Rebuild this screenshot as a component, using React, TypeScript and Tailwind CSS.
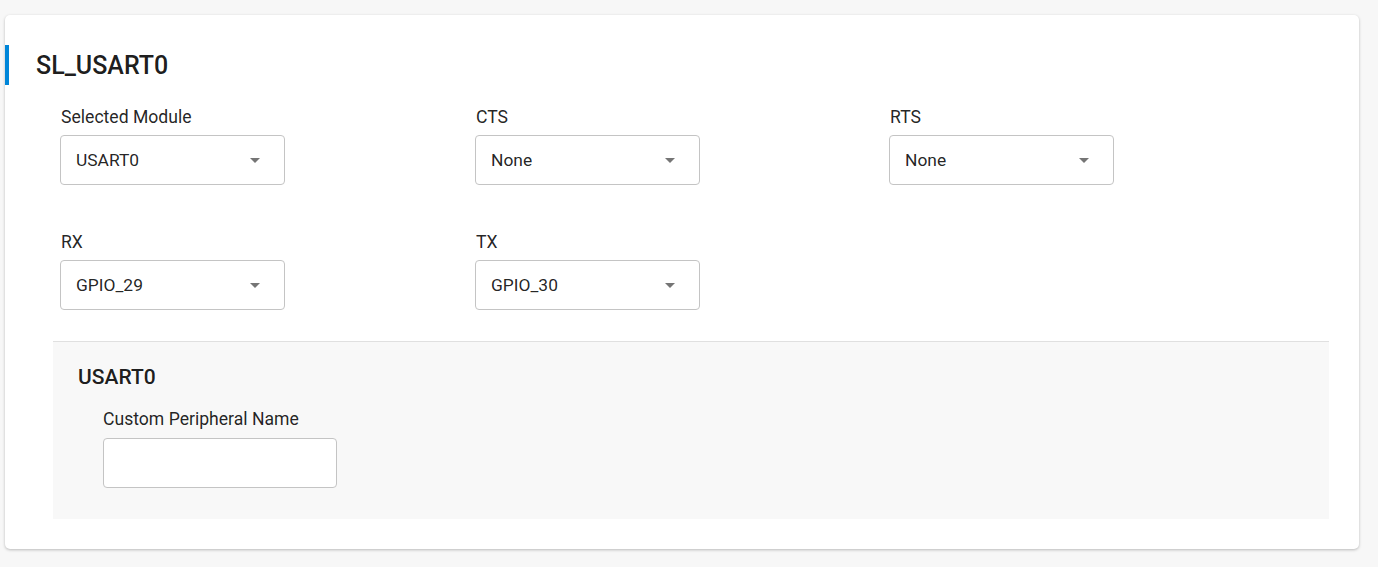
import React from "react";

function Arrow() {
  return (
    <svg width="24" height="24" viewBox="0 0 24 24" className="absolute right-[17px] top-1/2 -translate-y-1/2">
      <path d="M7 10l5 5 5-5z" fill="#757575" />
    </svg>
  );
}

function SelectField({ label, value }: { label: string; value: string }) {
  return (
    <div className="flex flex-col">
      <div className="h-[24px] leading-[24px] text-[17.6px] text-[rgba(0,0,0,0.87)] pl-[1px]">{label}</div>
      <div className="relative mt-[6px] w-[225px] h-[50px] border border-[#c4c4c4] rounded-[4px] bg-white flex items-center pl-[15px] text-[17.4px] text-[rgba(0,0,0,0.87)]">
        {value}
        <Arrow />
      </div>
    </div>
  );
}

export default function App() {
  return (
    <div
      className="min-h-screen bg-[#f7f7f7] pt-[15px] pl-[5px] pr-[19px] pb-[18px]"
      style={{ fontFamily: "Roboto, 'Liberation Sans', sans-serif" }}
    >
      <div className="bg-white rounded-[5px] shadow-[0_1px_3px_rgba(0,0,0,0.25)] h-[534px] pt-[30px]">
        <div className="h-[40px] border-l-4 border-[#0086d9] flex items-center pl-[27px]">
          <h1 className="text-[25px] font-medium text-[rgba(0,0,0,0.9)] leading-none">SL_USART0</h1>
        </div>
        <div className="mt-[20px] ml-[55px] grid grid-cols-[415px_414px_225px] gap-y-[45px]">
          <SelectField label="Selected Module" value="USART0" />
          <SelectField label="CTS" value="None" />
          <SelectField label="RTS" value="None" />
          <SelectField label="RX" value="GPIO_29" />
          <SelectField label="TX" value="GPIO_30" />
        </div>
        <div className="mt-[31px] ml-[48px] mr-[30px] h-[178px] bg-[#f8f8f8] border-t border-[#e0e0e0] pt-[21px] pl-[25px]">
          <div className="text-[21px] font-medium leading-[28px] text-[rgba(0,0,0,0.9)]">USART0</div>
          <div className="mt-[16px] pl-[25px]">
            <div className="h-[24px] leading-[24px] text-[17.6px] text-[rgba(0,0,0,0.87)]">Custom Peripheral Name</div>
            <input className="mt-[7px] w-[234px] h-[50px] border border-[#c4c4c4] rounded-[4px] bg-white outline-none px-[14px]" />
          </div>
        </div>
      </div>
    </div>
  );
}
